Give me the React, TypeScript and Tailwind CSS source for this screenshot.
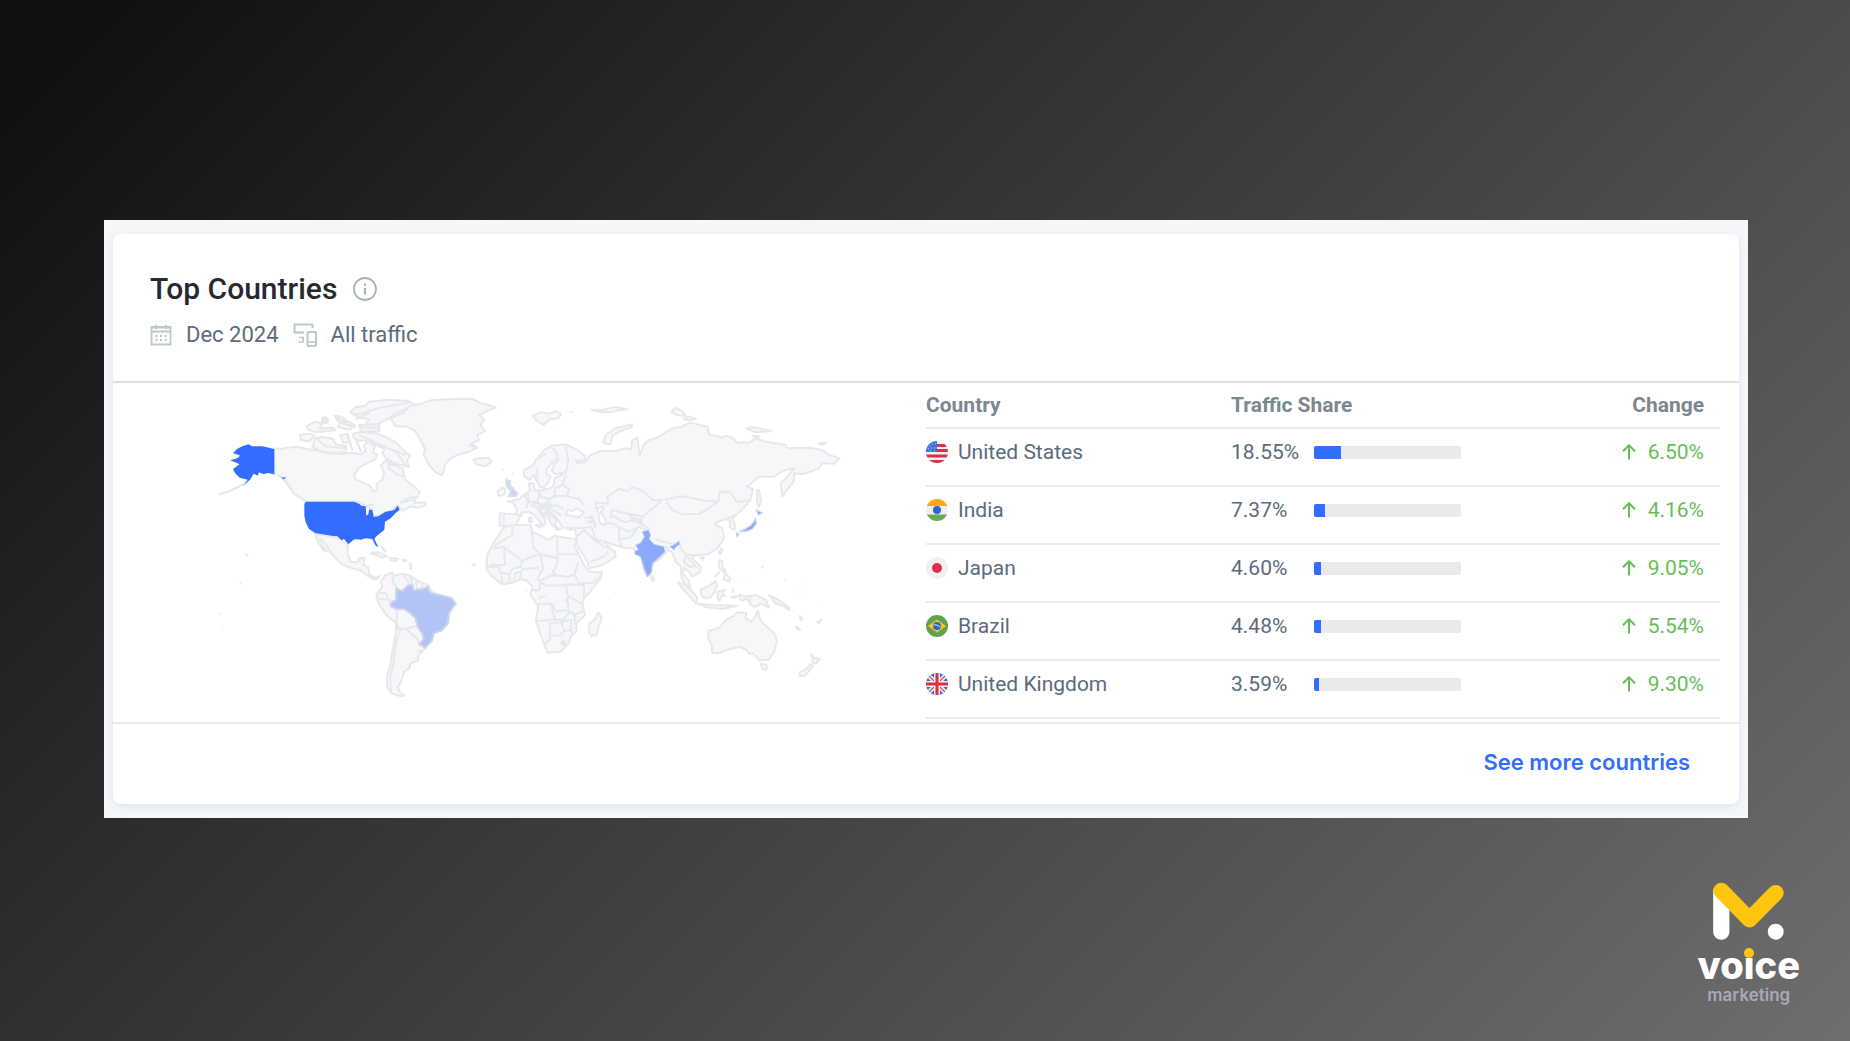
import { ReactNode } from 'react';

interface Country {
  name: string;
  share: number;
  change: number;
  flag: ReactNode;
}

const UsFlag = () => (
  <>
    <rect width="22" height="22" fill="#eef0f4" />
    <path d="M0 3h22v3H0zM0 8h22v3H0zM0 13.500h22v3H0zM0 19h22v3H0z" fill="#dc2f45" />
    <rect width="11" height="11" fill="#3b74e0" />
    <path d="M3 5h1M6 3h1M9 3h1M2 8h1M5 7h1M8 7h1M4 10h1M8 10h1" stroke="#b5cdfb" strokeWidth="1" />
  </>
);

const IndiaFlag = () => (
  <>
    <rect width="22" height="22" fill="#eef0f4" />
    <rect width="22" height="7" fill="#fba915" />
    <rect y="15.500" width="22" height="7" fill="#65ad55" />
    <circle cx="11" cy="11" r="4" fill="#2f62d6" />
  </>
);

const JapanFlag = () => (
  <>
    <rect width="22" height="22" fill="#eef0f3" />
    <circle cx="11" cy="11" r="5" fill="#dc2f45" />
  </>
);

const BrazilFlag = () => (
  <>
    <rect width="22" height="22" fill="#5fa24f" />
    <path d="M11 4.500l9 6.500-9 6.500L2 11z" fill="#fdc713" />
    <circle cx="11" cy="11" r="4" fill="#2f62d6" />
    <path d="M7.500 10c2.500-.5 5 .3 6.800 2.200" stroke="#dfe8fb" strokeWidth="1" fill="none" />
  </>
);

const UkFlag = () => (
  <>
    <rect width="22" height="22" fill="#3b66cf" />
    <path d="M0 0l22 22M22 0L0 22" stroke="#eef0f4" strokeWidth="4.500" />
    <path d="M0 0l22 22M22 0L0 22" stroke="#dc2f45" strokeWidth="1.200" />
    <path d="M11 0v22M0 11h22" stroke="#eef0f4" strokeWidth="6" />
    <path d="M11 0v22M0 11h22" stroke="#dc2f45" strokeWidth="3" />
  </>
);

const countries: Country[] = [
  { name: 'United States', share: 18.55, change: 6.5, flag: <UsFlag /> },
  { name: 'India', share: 7.37, change: 4.16, flag: <IndiaFlag /> },
  { name: 'Japan', share: 4.6, change: 9.05, flag: <JapanFlag /> },
  { name: 'Brazil', share: 4.48, change: 5.54, flag: <BrazilFlag /> },
  { name: 'United Kingdom', share: 3.59, change: 9.3, flag: <UkFlag /> },
];

const northAmerica = [
  // Canada
  '196,190 215,193 235,188 262,185 290,191 320,196 350,204 400,207 425,203 455,208 470,198 464,182 480,168 497,185 492,205 505,208 500,222 478,232 450,248 436,268 440,284 460,292 482,302 492,318 502,318 504,296 520,285 525,264 515,240 532,226 556,242 562,252 582,260 590,285 612,302 632,320 625,336 600,338 576,352 604,346 620,342 616,354 648,352 648,362 628,368 605,364 582,378 570,366 562,362 550,376 530,380 515,390 495,396 488,375 470,362 445,350 290,350 270,336 255,326 240,302 220,278 208,272 196,268',
  // Mexico and Central America
  '318,446 340,450 368,454 385,458 400,468 418,480 415,505 425,530 445,532 452,520 468,518 462,538 478,548 480,568 498,578 512,572 508,580 495,584 475,572 455,556 430,550 398,538 378,518 360,494 342,466 332,460 340,480 354,500 344,496 328,474',
  // Arctic islands
  '424,80 440,66 470,62 480,50 540,44 600,48 620,60 590,72 560,84 540,100 500,120 470,118 480,102 450,98',
  '450,120 510,118 512,138 456,140',
  '376,92 400,96 412,108 384,106',
  '292,124 318,110 340,116 330,130 374,128 380,136 320,142 298,134',
  '272,150 300,146 318,152 300,170 276,164',
  '318,160 340,156 372,162 380,178 412,184 410,202 366,204 334,198 310,186',
  '394,150 416,146 424,172 404,174',
  '430,146 452,142 500,144 530,156 560,172 584,196 604,212 594,228 600,246 578,240 560,236 530,220 520,204 528,192 500,180 476,168 450,166 436,160',
  '536,236 558,240 584,254 582,274 562,268 540,250',
  '392,112 420,110 440,124 420,134 388,126',
  '340,100 356,100 356,112 342,112',
  // Cuba, Hispaniola and the Bahamas
  '484,506 505,500 534,514 520,518 494,508',
  '542,518 568,522 560,528 544,526',
  '518,484 530,498 526,500',
  '582,524 592,526 584,530',
];

const alaska =
  '72,204 84,192 100,184 118,178 130,184 160,184 196,192 196,268 176,264 164,268 150,262 146,272 134,266 122,286 104,300 116,284 92,278 78,264 72,252 92,238 64,226 84,220 94,212';

const usMainland =
  '290,350 435,350 450,356 458,362 470,364 472,392 478,388 480,374 490,374 494,396 508,394 530,380 555,376 566,362 572,374 560,384 545,400 528,410 526,434 502,454 496,462 508,486 500,482 490,462 470,460 455,464 440,462 432,466 418,478 405,462 398,466 385,454 368,452 340,448 318,444 300,432 290,412 286,392 286,356';

// Atlantic side: Greenland, Iceland and South America
const atlantic = [
  '65,100 85,90 105,82 125,62 150,58 185,46 250,42 310,42 335,54 360,60 380,68 350,80 330,92 345,102 335,120 348,138 325,152 330,165 306,176 326,188 300,200 270,208 245,220 230,236 222,262 218,270 200,262 180,240 165,212 168,192 155,165 140,140 115,125 80,124',
  '314,224 330,220 358,218 368,230 348,244 322,238',
  '36,590 48,572 70,562 72,572 100,566 124,572 150,590 178,600 188,620 210,630 250,642 260,656 240,684 236,716 218,736 190,746 186,768 172,786 160,798 148,812 148,826 124,836 122,848 106,860 96,890 86,906 92,920 106,932 88,932 66,924 54,906 54,880 64,836 72,790 82,736 80,712 56,694 34,664 22,640 26,622 40,606',
];

const southAmericaBorders =
  'M70,562 72,590 84,608 82,640M22,640 60,645 84,670M100,566 124,600M140,590 145,612M160,594 160,614M84,672 82,712 94,740 84,760 72,840 64,880 66,924M84,730 110,732 146,722M110,732 146,762 154,784M146,722 160,746M146,800 160,798M26,622 50,625 60,645M124,572 130,600';

const brazil =
  '64,656 82,644 82,612 100,618 116,602 130,600 134,616 160,612 176,606 184,624 210,630 248,640 260,656 240,684 236,716 218,736 194,744 188,768 168,788 152,776 164,762 160,746 146,726 140,700 124,684 104,672 82,672 66,664';

const africa =
  '102,430 120,420 160,420 185,420 190,440 215,452 240,465 255,452 300,460 318,462 322,472 316,480 330,510 345,540 362,560 400,562 395,580 370,612 345,640 340,660 348,690 322,715 322,740 305,755 300,775 275,800 235,803 225,775 215,750 200,705 208,665 185,630 190,605 175,588 155,582 135,592 100,598 70,575 52,552 55,510 75,470 90,450';

const africaBorders =
  'M130,426 130,450 100,468 76,482 76,490 104,486M105,485 108,540 62,540M104,486 160,528 192,512M160,528 155,545 130,552 120,570M188,440 194,490 215,508 264,520M265,458 265,540M265,508 326,508M192,512 215,510 222,550 205,582M160,552 210,548M160,552 152,582M52,545 90,545 92,562 120,568 122,592M100,598 98,572M135,590 138,566 155,560M265,540 252,560 262,572 290,574M215,586 252,570 262,572M205,582 215,592 230,600M328,532 316,568 292,578M316,568 330,594 372,594 398,570M292,598 345,600 345,640M228,602 292,600 296,635 298,675 262,680 248,656 206,656M186,616 210,616 214,592M296,632 344,660M245,655 258,704 200,708M243,710 243,764 228,776M243,716 276,712 286,738 270,752 246,750M258,702 282,706 302,680M276,712 306,704 306,735 286,738M298,675 316,690 342,678M316,690 318,720M306,735 312,752M210,640 228,632';

const eurasia =
  '92,385 138,388 145,375 132,352 115,350 150,343 165,330 182,318 180,295 194,295 198,318 225,314 248,308 255,296 258,278 275,272 284,262 262,268 248,258 255,238 268,226 258,224 235,250 232,265 245,275 238,292 224,308 212,305 202,285 195,270 180,285 165,272 165,255 190,243 205,220 225,195 250,182 290,178 330,198 348,212 345,232 320,226 325,234 350,230 362,212 395,198 440,198 470,190 486,194 490,166 505,158 512,210 524,180 540,165 562,160 580,148 610,130 635,126 665,112 685,118 715,125 720,148 760,158 770,152 790,158 805,174 830,172 840,174 860,160 890,170 950,180 955,190 1020,188 1060,195 1080,210 1112,220 1095,236 1060,235 1050,250 1000,268 975,265 975,288 950,320 940,335 935,295 952,278 975,250 940,258 915,275 870,275 835,305 852,312 844,345 818,375 790,400 800,425 795,436 782,425 784,408 770,402 742,412 740,420 760,430 765,460 745,490 715,508 690,510 675,512 670,520 695,545 694,560 670,575 660,560 645,548 642,565 658,585 665,610 650,600 637,575 635,545 620,530 608,500 595,495 578,518 556,532 548,545 545,565 535,575 525,555 515,510 500,505 494,490 465,488 430,478 405,468 412,484 438,500 440,515 400,540 362,550 355,530 325,480 322,455 318,430 280,428 272,412 262,400 258,420 268,430 252,424 240,404 225,388 208,374 226,400 230,412 220,425 212,408 194,388 178,380 160,382 140,420 110,424 92,422';

const eurasiaBorders =
  'M104,390 104,422M138,388 160,392M165,330 178,350 172,372M175,325 182,352 205,352 212,320M212,320 215,336 240,342 256,334 258,312M205,352 220,362 236,350M185,360 220,372 240,362M205,250 205,290M232,205 205,222M268,226 262,200 250,190M290,184 298,230 290,265M258,310 280,300 290,270M256,334 290,332 330,342 344,360M236,370 260,360 286,372M240,345 246,372 276,392M258,380 280,392M226,380 248,398M280,298 300,312 294,330M345,398 375,398M352,408 378,414 378,430M345,428 368,426 378,460 402,474M322,455 345,436 382,470 402,480M365,530 402,516 418,500M380,370 382,352 418,356 414,336 450,312 476,318 490,306 522,318 552,346 582,344M580,344 548,372 522,394 478,386 452,380 428,376 424,400M408,415 432,415 456,430 480,440 500,430M430,392 468,412 500,402 520,410M478,386 500,410 520,420M450,430 450,462 458,486M452,462 486,458 508,424 530,434M520,394 514,410 542,436M590,345 602,340 640,334 700,346 748,350 715,372 692,386 640,388 608,374 592,352M748,350 752,320 782,320 805,352 838,345M560,462 602,476 632,474M632,474 634,490 652,510 672,510M652,510 644,530 662,546 682,540M652,510 666,530 684,548M590,480 596,495M770,402 800,390M318,430 352,428';

const eurasiaIslands = [
  // Svalbard and Arctic archipelagos
  '192,92 215,82 240,86 262,78 276,88 268,100 240,104 224,120 204,108',
  '368,74 400,76 436,66 474,72 430,80 400,82',
  '402,172 412,148 440,130 490,118 488,126 452,140 430,152 424,178 410,176',
  '606,80 620,68 642,80 650,92 622,90',
  '644,100 660,94 680,102 652,106',
  '832,130 850,126 906,138 860,142',
  '852,152 870,154 858,160',
  '1050,175 1070,174 1060,180',
  // Ireland, Sicily, Crete
  '86,318 102,308 110,318 104,330 88,332',
  '200,420 216,420 212,428',
  '180,398 188,398 188,412 180,410',
  '260,432 276,433 262,435',
  '296,433 314,430 304,436',
  // Sakhalin, Taiwan, Sri Lanka, Hainan
  '864,315 870,315 876,348 868,366 864,352',
  '750,502 758,490 760,494 754,508',
  '546,572 556,580 554,588 546,584',
  '694,518 704,516 702,524',
  // Madagascar
  '388,682 398,698 382,750 366,752 360,738 362,716 378,702',
  // Philippines
  '750,526 760,528 760,548 770,556 764,560 750,548',
  '768,562 784,580 780,590 764,582',
  '738,574 752,562',
  // Indonesia and New Guinea
  '626,592 650,600 684,636 682,656 652,624',
  '684,656 730,660 806,662 760,672 710,666',
  '694,614 720,602 740,588 744,600 736,622 724,638 704,638 696,628',
  '746,620 770,614 760,622 770,634 758,632 752,648 746,640',
  '790,612 794,622',
  '786,636 806,634 798,638',
  '812,628 830,634 860,630 890,644 900,668 876,656 856,666 844,658 834,640 820,648 812,640',
  '900,630 930,646 960,668 962,676 944,664 918,654',
  // Australia, Tasmania, New Zealand
  '718,738 750,728 772,704 795,692 805,682 832,684 830,700 848,710 860,692 866,676 874,706 890,722 916,744 924,768 916,800 900,824 870,826 854,806 840,806 832,794 812,786 774,794 752,804 730,804 728,780 718,760',
  '876,836 896,842 890,856 880,852',
  '1026,806 1034,818 1052,822 1040,836 1030,832 1032,820',
  '1024,838 1032,844 1008,872 992,874 992,862 1012,852',
  '980,724 994,734 986,734',
  '1044,712 1058,702 1052,714',
  '992,692 1000,704 996,706',
];

const india = [
  '520,440 538,435 545,450 541,462 555,478 585,485 588,500 570,518 550,535 548,560 536,575 525,550 515,515 498,508 498,498 508,494 500,480 515,474 526,456',
  '602,485 618,478 630,468 632,478 618,488 616,496 610,490',
];

const japan = ['862,374 880,384 868,390', '860,398 862,415 850,432 835,438 812,440 828,432 845,422 855,410', '802,444 810,446 804,456'];

const greatBritain = '112,286 124,288 122,300 134,312 145,326 140,334 118,334 126,320 112,300';

const shapes = (list: string[]) => list.map((points) => <polygon key={points} points={points} />);

const WorldMap = () => (
  <svg viewBox="0 0 1950 960" className="w-[650px] max-w-full" role="img" aria-label="World map" strokeLinejoin="round">
    <g fill="#f5f7f9" stroke="#e6e8eb" strokeWidth="6">
      {shapes(northAmerica)}
      <path d="M30,328 62,318 104,298M220,278 258,328M384,98 396,108M388,110 430,124M452,128 510,128M416,150 430,196M440,160 456,200M470,362 494,360M492,508 510,508" strokeWidth="7" fill="none" />
      <circle cx="348" cy="106" r="9" fill="#e6e8eb" />
      <path d="M322,160 350,184 410,190M432,92 520,66 600,54M440,104 480,84M450,150 560,200 590,240M540,190 590,210" fill="none" />
      <g fill="#326dff" stroke="none">
        <polygon points={alaska} />
        <polygon points={usMainland} />
      </g>
      <path d="M218,278h12l-6 4zM104,300l14-12" stroke="#6f96fb" fill="#326dff" strokeWidth="3" />
    </g>
    <g transform="translate(480 0)" fill="#f5f7f9" stroke="#e6e8eb" strokeWidth="6">
      {shapes(atlantic)}
      <path d={southAmericaBorders} fill="none" />
      <path d="M310,537l10 4M124,534l2 20M400,253l3 2M165,180l6 14M300,180l20 6" strokeWidth="8" />
      <polygon points={brazil} fill="#b1c4f5" stroke="#c9d3ea" />
    </g>
    <g transform="translate(780 0)" fill="#f5f7f9" stroke="#e6e8eb" strokeWidth="6">
      <polygon points={africa} />
      <path d={africaBorders} fill="none" />
      <polygon points={eurasia} />
      <path d={eurasiaBorders} fill="none" />
      <path d="M208,360 250,362M190,350l14 6M230,372l34 30M484,396l30 12M490,408l24-4M365,392l14 30M312,684l8 14M292,640v12" strokeWidth="10" fill="none" />
      <circle cx="284" cy="775" r="6" fill="#e6e8eb" />
      <polygon points="290,390 296,374 312,378 322,370 346,382 330,396 306,392" fill="#fff" />
      <polygon points="384,372 400,364 404,372 394,382 410,404 408,420 392,414 390,394" fill="#fff" />
      <polygon points="386,468 396,466 420,484 408,488" fill="#fff" />
      {shapes(eurasiaIslands)}
      <path d="M844,634v28M300,82h10M265,122h4M130,268l4-4M420,642h3M432,724h2M360,678h2M514,592h2M876,550l8-8M946,585h4M824,582h3M1013,584h2M992,622h2M1054,662h2M170,618h4" strokeWidth="4" fill="none" />
      <g fill="#8aa9fd" stroke="#c3d0f3" strokeWidth="3">{shapes(india)}</g>
      <g fill="#86a5f8" stroke="#cbd6f3" strokeWidth="4">{shapes(japan)}</g>
      <polygon points={greatBritain} fill="#cdd6ee" stroke="#d9dfee" />
      <path d="M108,284l8-4M104,308l8 4" strokeWidth="6" />
    </g>
    {/* Pacific islands */}
    <path d="M108,508l10 5M92,592l4 4M28,686h6M38,732h4" stroke="#e6e8eb" strokeWidth="5" />
  </svg>
);

const InfoIcon = () => (
  <svg viewBox="0 0 24 24" className="size-6" fill="none" stroke="#a9b5b5" strokeWidth="1.800" aria-hidden="true">
    <circle cx="12" cy="12" r="11" />
    <path d="M12 11v6.500M12 6.500v2.200" strokeWidth="2.200" />
  </svg>
);

const CalendarIcon = () => (
  <svg viewBox="0 0 22 22" className="size-[22px]" fill="none" stroke="#bccac8" strokeWidth="1.800" aria-hidden="true">
    <path d="M1.500 3h19v17.500h-19zM1.500 7.500h19" />
    <path d="M1.500 3.500h19" strokeWidth="2" />
    <path d="M6 1v4M16 1v4" strokeWidth="2" />
    <path d="M5.500 12h11M5.500 16h11" stroke="#b4c3dc" strokeWidth="2" strokeDasharray="2 2.500" />
  </svg>
);

const DevicesIcon = () => (
  <svg viewBox="0 0 24 24" className="size-6" fill="none" stroke="#bccac8" strokeWidth="2" strokeLinejoin="round" aria-hidden="true">
    <path d="M19.500 5V1.500H1.500v8H11" />
    <path d="M1.500 9.500h9M6 14.500h5M10 14v5M5.500 19h5" strokeWidth="1.600" />
    <rect x="14.500" y="9" width="8.500" height="14" rx="1" />
    <path d="M14.500 19h8.500" strokeWidth="1.500" />
  </svg>
);

const ArrowUp = () => (
  <svg viewBox="0 0 14 16" className="h-4 w-3.5" fill="none" stroke="#67bd58" strokeWidth="2" aria-hidden="true">
    <path d="M7 15.500V1.500M1 7.200l6-6 6 6" />
  </svg>
);

const Logo = () => (
  <div className="flex flex-col items-center">
    <svg viewBox="124 66 220 176" className="h-[59px] w-[73px]" fill="none" strokeLinecap="round" strokeLinejoin="round" aria-hidden="true">
      <path d="M152 95v120" stroke="#fff" strokeWidth="49" />
      <path d="M152 91l85 87 79-80" stroke="#fdc50d" strokeWidth="48" />
      <circle cx="316" cy="215" r="24" fill="#fff" />
    </svg>
    <div className="mt-0.5 text-[38px] leading-[44px] font-extrabold text-white">
      vo
      <span className="relative">
        i
        <span className="absolute top-1.5 left-1/2 size-2.5 -translate-x-1/2 rounded-full bg-[#fdc50d]" />
      </span>
      ce
    </div>
    <div className="text-[17px] leading-4 font-semibold text-[#a3acb8]">marketing</div>
  </div>
);

const App = () => {
  return (
    <div className="flex min-h-screen flex-col bg-[linear-gradient(135deg,#111111_5%,#6e6e6e_100%)] pt-[220px] pr-[102px] pl-[104px] font-['Roboto',sans-serif]">
      {/* Panel */}
      <main className="bg-[#f5f7fa] px-[9px] pt-3.5 pb-3.5">
        <section className="rounded-lg bg-white shadow-[0_3px_8px_#dfe3ec]">
          <header className="border-b-2 border-[#dadfea] px-[37px] pt-[37px] pb-8">
            <div className="flex items-center gap-4">
              <h1 className="text-3xl leading-9 font-medium text-[#262a30]">Top Countries</h1>
              <InfoIcon />
            </div>
            <div className="mt-3.5 flex items-center gap-3.5 text-[22px] leading-7 text-[#5a6b7d]">
              <CalendarIcon />
              <span>Dec 2024</span>
              <DevicesIcon />
              <span>All traffic</span>
            </div>
          </header>

          {/* Map and table */}
          <div className="flex pb-[3px]">
            <div className="flex w-1/2 items-start justify-center pt-0.5 pl-7">
              <WorldMap />
            </div>
            <div className="w-1/2 pr-[19px]">
              <table className="w-full text-left text-[21px] leading-6 text-[#5a6b7d]">
                <thead>
                  <tr className="h-[45px] border-b-2 border-[#e9ebed] text-[#7b8791]">
                    <th className="w-[305px] font-bold">Country</th>
                    <th className="font-bold">Traffic Share</th>
                    <th className="pr-4 text-right font-bold">Change</th>
                  </tr>
                </thead>
                <tbody>
                  {countries.map((country) => (
                    <tr key={country.name} className="h-[58px] border-b-2 border-[#e9ebed]">
                      <td className="pb-2.5">
                        <div className="flex items-center gap-2.5">
                          <svg viewBox="0 0 22 22" className="size-[22px] rounded-full" aria-hidden="true">
                            {country.flag}
                          </svg>
                          <span>{country.name}</span>
                        </div>
                      </td>
                      <td className="pb-2.5">
                        <div className="flex items-center">
                          <span className="w-[83px]">{country.share.toFixed(2)}%</span>
                          <div className="h-[13px] w-[147px] overflow-hidden rounded-xs bg-[#e8eaec]">
                            <div className="h-full bg-[#326dff]" style={{ width: `${country.share}%` }} />
                          </div>
                        </div>
                      </td>
                      <td className="pr-4 pb-2.5">
                        <div className="flex items-center justify-end gap-3 text-[#67bd58]">
                          <ArrowUp />
                          <span>{country.change.toFixed(2)}%</span>
                        </div>
                      </td>
                    </tr>
                  ))}
                </tbody>
              </table>
            </div>
          </div>

          <footer className="flex justify-end border-t-2 border-[#e6e9ee] px-[49px] pt-6 pb-7">
            <a href="#countries" className="font-['Inter',sans-serif] text-[22px] leading-7 font-semibold text-[#326dff]">
              See more countries
            </a>
          </footer>
        </section>
      </main>

      <div className="mt-16 -mr-[52px] self-end font-['Inter',sans-serif]">
        <Logo />
      </div>
    </div>
  );
};

export default App;
